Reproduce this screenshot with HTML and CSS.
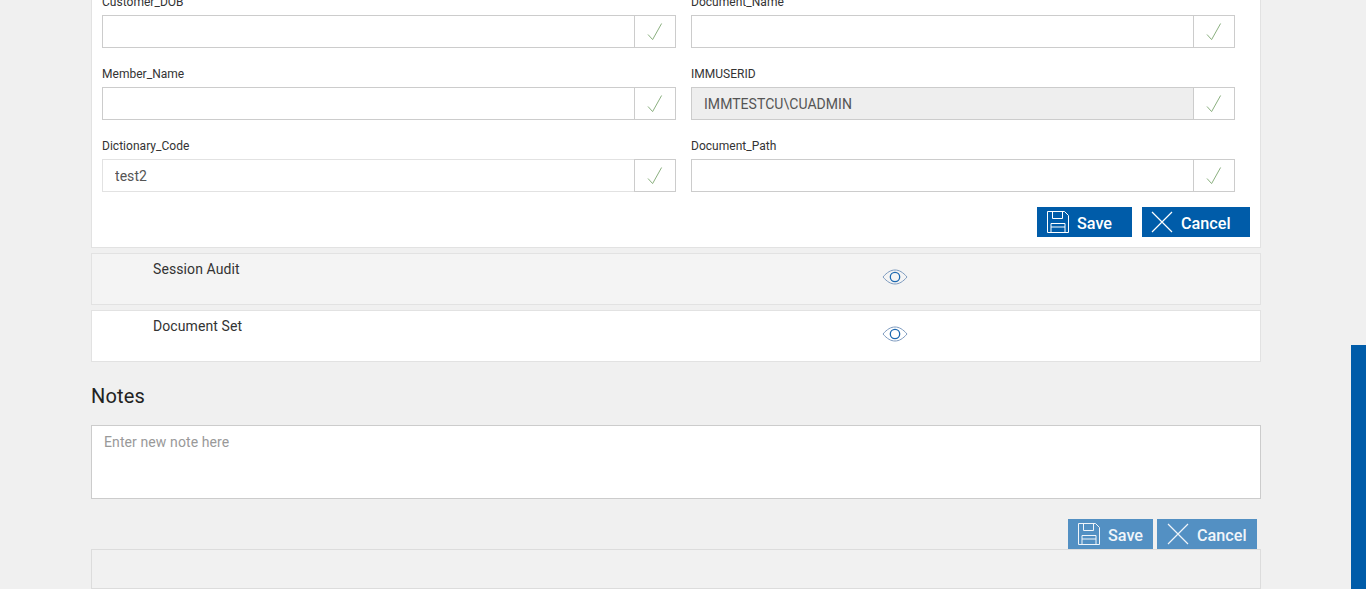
FILE: index.html
```html
<!DOCTYPE html>
<html lang="en">
<head>
<meta charset="utf-8">
<title>Form</title>
<link rel="stylesheet" href="styles.css">
</head>
<body>
<svg class="defs" width="0" height="0" aria-hidden="true">
  <symbol id="check" viewBox="0 0 16 20"><path d="M1 12.500 5.600 17.600 14.600 1.500" fill="none" stroke="currentColor" stroke-width="1"/></symbol>
  <symbol id="save" viewBox="0 0 22 22"><path d="M.5 .5H17.500L21.500 4.500V21.500H.5Z M5.500 .5V7.500H15.500V.5 M4 21.500V12.500H18V21.500 M4 16H18" fill="none" stroke="currentColor" stroke-width="1"/></symbol>
  <symbol id="cross" viewBox="0 0 22 22"><path d="M1 1 21 21M21 1 1 21" fill="none" stroke="currentColor" stroke-width="1.200"/></symbol>
  <symbol id="eye" viewBox="0 0 26 16"><path d="M1 8C5 3.200 9 1 13 1s8 2.200 12 7c-4 4.800-8 7-12 7S5 12.800 1 8Z" fill="none" stroke="#7f9cc0" stroke-width="1"/><circle cx="13" cy="8" r="4.700" fill="none" stroke="#1c68b0" stroke-width="1.300"/></symbol>
</svg>
<main class="page">
  <section class="card form-card">
    <div class="fields">
      <div class="field"><label class="field-label">Customer_DOB</label><div class="group"><input class="input"><span class="addon"><svg class="check"><use href="#check"/></svg></span></div></div>
      <div class="field"><label class="field-label">Document_Name</label><div class="group"><input class="input"><span class="addon"><svg class="check"><use href="#check"/></svg></span></div></div>
      <div class="field"><label class="field-label">Member_Name</label><div class="group"><input class="input"><span class="addon"><svg class="check"><use href="#check"/></svg></span></div></div>
      <div class="field"><label class="field-label">IMMUSERID</label><div class="group"><input class="input input-readonly" value="IMMTESTCU\CUADMIN" readonly><span class="addon"><svg class="check"><use href="#check"/></svg></span></div></div>
      <div class="field"><label class="field-label">Dictionary_Code</label><div class="group"><input class="input input-light" value="test2"><span class="addon"><svg class="check"><use href="#check"/></svg></span></div></div>
      <div class="field"><label class="field-label">Document_Path</label><div class="group"><input class="input"><span class="addon"><svg class="check"><use href="#check"/></svg></span></div></div>
    </div>
    <div class="actions">
      <button class="btn btn-save" type="button"><svg class="btn-icon"><use href="#save"/></svg><span class="btn-text">Save</span></button>
      <button class="btn btn-cancel" type="button"><svg class="btn-icon"><use href="#cross"/></svg><span class="btn-text">Cancel</span></button>
    </div>
  </section>
  <section class="card row row-muted">
    <h3 class="row-title">Session Audit</h3>
    <svg class="eye"><use href="#eye"/></svg>
  </section>
  <section class="card row">
    <h3 class="row-title">Document Set</h3>
    <svg class="eye"><use href="#eye"/></svg>
  </section>
  <h2 class="notes-title">Notes</h2>
  <textarea class="notes-input" placeholder="Enter new note here"></textarea>
  <div class="notes-actions">
    <button class="btn btn-faded btn-faded-save" type="button"><svg class="btn-icon"><use href="#save"/></svg><span class="btn-text">Save</span></button>
    <button class="btn btn-faded btn-faded-cancel" type="button"><svg class="btn-icon"><use href="#cross"/></svg><span class="btn-text">Cancel</span></button>
  </div>
  <div class="notes-list"></div>
</main>
<div class="side-tab"></div>
</body>
</html>
```
FILE: styles.css
```css
* { box-sizing: border-box; }
html, body { margin: 0; height: 589px; overflow: hidden; }
body { position: relative; background: #f0f0f0; font-family: Roboto, "Liberation Sans", sans-serif; color: #333; }
.defs { position: absolute; }
.page { width: 1170px; margin-left: 91px; }
.card { background: #fff; border: 1px solid #e2e2e2; }
.form-card { margin-top: -17px; padding: 10px 10px 10px; }
.fields { display: grid; grid-template-columns: 574px 544px; column-gap: 15px; row-gap: 18px; }
.field-label { display: block; height: 16px; margin-bottom: 5px; font-size: 12px; line-height: 16px; letter-spacing: .03px; color: #333; }
.group { display: flex; height: 33px; }
.input { flex: 1; min-width: 0; height: 33px; padding: 0 12px; border: 1px solid #ccc; border-right: 0; background: #fff; font: 14px Roboto, sans-serif; letter-spacing: .05px; color: #555; outline: 0; }
.input-readonly { background: #eee; }
.input-light { border-color: #e2e2e2; }
.addon { display: flex; flex: none; width: 42px; align-items: center; justify-content: center; border: 1px solid #ccc; }
.check { width: 16px; height: 20px; color: #8bb07f; }
.actions { display: flex; justify-content: flex-end; gap: 10px; margin-top: 15px; }
.btn { display: flex; align-items: center; height: 30px; padding: 0; border: 0; background: #005ca9; color: #fff; font: 500 16.200px/30px Roboto, sans-serif; }
.btn-text { position: relative; top: 1.500px; }
.btn-save { width: 95px; padding-left: 10px; }
.btn-cancel { width: 108px; padding-left: 9px; }
.btn-faded { background: #5390c3; color: #f0f5fa; }
.btn-faded-save { width: 85px; padding-left: 10px; }
.btn-faded-cancel { width: 100px; padding-left: 10px; }
.btn-icon { flex: none; width: 22px; height: 22px; margin-right: 8px; }
.row { display: flex; align-items: flex-start; height: 52px; margin-top: 5px; padding-left: 61px; }
.row-muted { background: #f4f4f4; }
.row-title { width: 729px; margin: 6px 0 0; font-size: 14px; font-weight: 400; line-height: 18px; letter-spacing: .1px; color: #333; }
.eye { width: 26px; height: 16px; margin-top: 15px; }
.notes-title { margin: 21px 0 16px; font-size: 20px; font-weight: 400; line-height: 26px; letter-spacing: .2px; color: #222; }
.notes-input { display: block; width: 1170px; height: 74px; padding: 8px 12px; border: 1px solid #ccc; background: #fff; font: 14px Roboto, sans-serif; letter-spacing: .1px; resize: none; outline: 0; }
.notes-input::placeholder { color: #999; opacity: 1; }
.notes-actions { display: flex; justify-content: flex-end; gap: 4px; margin-top: 20px; margin-right: 4px; }
.notes-list { height: 40px; border: 1px solid #dcdcdc; background: #f1f1f1; }
.side-tab { position: absolute; right: 0; top: 345px; width: 15px; height: 244px; background: #005ca9; }
```
